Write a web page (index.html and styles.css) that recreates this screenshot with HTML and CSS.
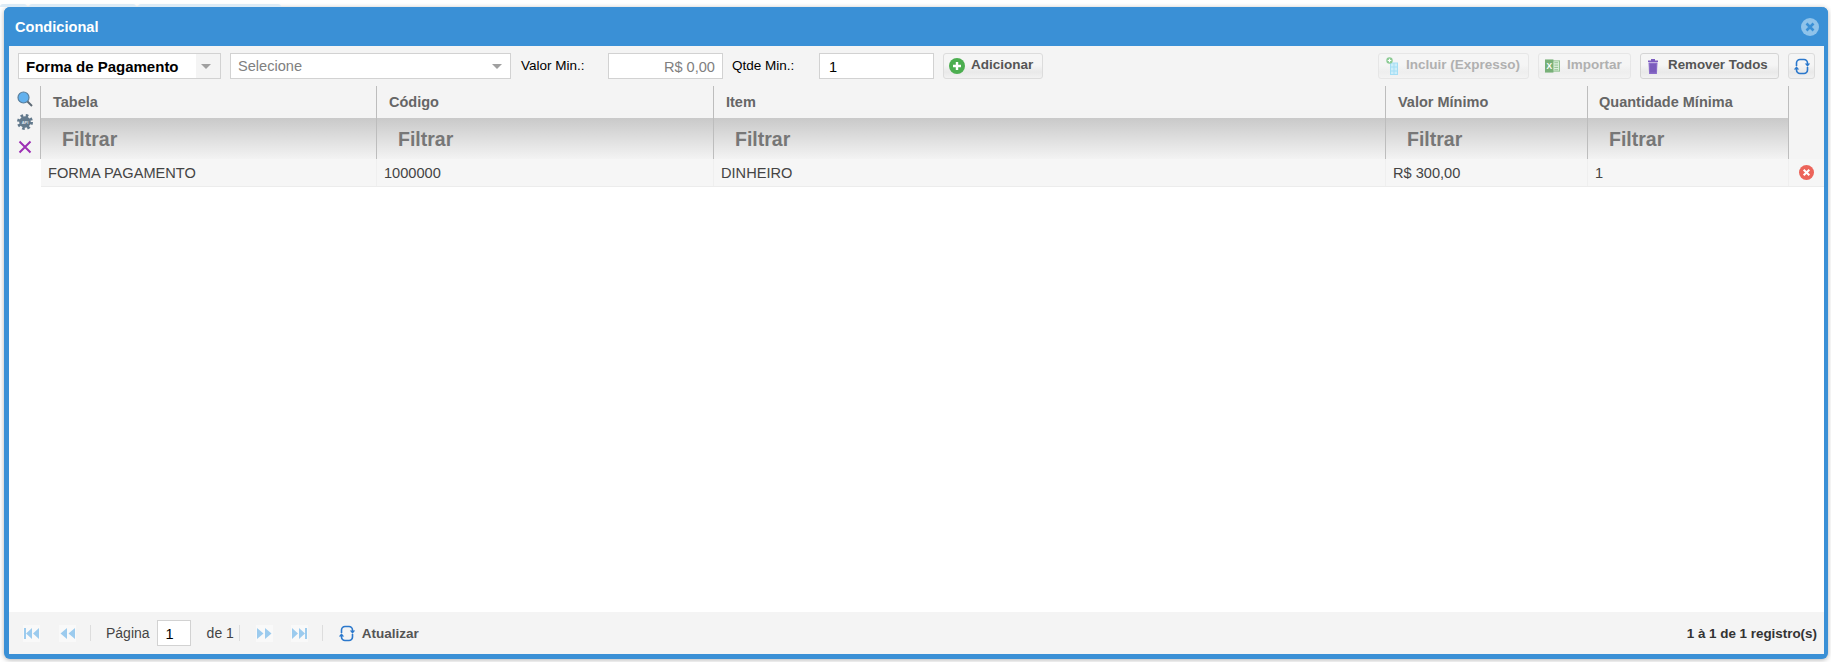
FILE: index.html
```html
<!DOCTYPE html>
<html lang="pt-BR">
<head>
<meta charset="utf-8">
<title>Condicional</title>
<link rel="stylesheet" href="styles.css">
</head>
<body>
<div class="backtabs"><span class="tab tab-a"></span><span class="tab tab-b"></span><span class="tab tab-c"></span></div>
<section class="window">
  <header class="titlebar">
    <h1 class="title">Condicional</h1>
    <svg class="close" viewBox="0 0 18 18"><circle cx="9" cy="9" r="9" fill="#8fc3ea"/><path d="M5.5 5.5l7 7M12.5 5.5l-7 7" stroke="#3a90d6" stroke-width="2.6"/></svg>
  </header>
  <div class="toolbar">
    <div class="select select-type"><span class="select-value">Forma de Pagamento</span><span class="select-arrow"></span></div>
    <div class="select select-item"><span class="select-placeholder">Selecione</span><span class="select-arrow"></span></div>
    <label class="field-label label-valor">Valor Min.:</label>
    <div class="input input-valor">R$ 0,00</div>
    <label class="field-label label-qtde">Qtde Min.:</label>
    <div class="input input-qtde">1</div>
    <button class="btn btn-add"><svg class="ico" viewBox="0 0 16 16"><circle cx="8" cy="8" r="8" fill="#4cae50"/><path d="M8 4v8M4 8h8" stroke="#fff" stroke-width="2.4"/></svg>Adicionar</button>
    <div class="toolbar-right">
      <button class="btn btn-disabled btn-incluir"><svg class="ico-tall" viewBox="0 0 12 18"><rect x="4.500" y="6" width="7" height="11.500" fill="#cdeefa" stroke="#a5def5" stroke-width="1"/><path d="M4.500 10h7M4.500 14h7M8 6v11.500" stroke="#a5def5" stroke-width="1"/><circle cx="3.500" cy="3.500" r="3.200" fill="#8ccb94"/><path d="M3.500 1.700v3.600M1.700 3.500h3.600" stroke="#fff" stroke-width="1.200"/></svg>Incluir (Expresso)</button>
      <button class="btn btn-disabled btn-importar"><svg class="ico-xl" viewBox="0 0 16 14"><rect x="7" y="1.500" width="8.500" height="11" fill="#dcefdc" stroke="#8cc08c"/><path d="M10 3.500h4M10 6h4M10 8.500h4M10 11h4" stroke="#8cc08c"/><rect x="0" y="0" width="9" height="14" fill="#78b078"/><text x="4.500" y="10.500" class="xl-letter">X</text></svg>Importar</button>
      <button class="btn btn-remover"><svg class="ico-trash" viewBox="0 0 12 16"><path d="M1 2.500h10v1.500H1zM4 2.500V1h4v1.500z" fill="#7c5cc0"/><path d="M1.500 4.500h9l-.6 11.500H2.100z" fill="#8a6cc9"/><path d="M4 6v8.500M6 6v8.500M8 6v8.500" stroke="#6b4db0" stroke-width="1"/></svg>Remover Todos</button>
      <button class="btn btn-refresh"><svg class="ico-refresh" viewBox="-1 0 16 17"><path d="M1.500 8V5a3.500 3.500 0 0 1 3.500-3.500h4a3.500 3.500 0 0 1 3.500 3.500v1M12.500 9v3a3.500 3.500 0 0 1-3.500 3.500H5A3.500 3.500 0 0 1 1.500 12v-1" fill="none" stroke="#2b78cc" stroke-width="1.600"/><path d="M9.800 5.500h5.400l-2.700 3.200zM-1.200 11.500h5.400L1.500 8.300z" fill="#2b78cc"/></svg></button>
    </div>
  </div>
  <div class="grid-head">
    <div class="grid-tools">
      <svg class="tool" viewBox="0 0 16 16"><circle cx="6.500" cy="6.500" r="5.500" fill="#62b1ee" stroke="#5a7f9c" stroke-width="1.200"/><path d="M10.500 10.500l4.500 4.500" stroke="#5d6a75" stroke-width="2"/></svg>
      <svg class="tool" viewBox="0 0 16 16"><circle cx="8" cy="8" r="5.800" fill="#62798c"/><circle cx="8" cy="8" r="6.500" fill="none" stroke="#62798c" stroke-width="3" stroke-dasharray="2.550 2.550"/><text x="8" y="9.500" class="api-letter">API</text></svg>
      <svg class="tool tool-clear" viewBox="0 0 16 16"><path d="M2.500 2.500l11 11M13.500 2.500l-11 11" stroke="#9c2fb4" stroke-width="2"/></svg>
    </div>
    <div class="col col-tabela"><div class="col-title">Tabela</div><div class="col-filter">Filtrar</div></div>
    <div class="col col-codigo"><div class="col-title">Código</div><div class="col-filter">Filtrar</div></div>
    <div class="col col-item"><div class="col-title">Item</div><div class="col-filter">Filtrar</div></div>
    <div class="col col-valor"><div class="col-title">Valor Mínimo</div><div class="col-filter">Filtrar</div></div>
    <div class="col col-qtde"><div class="col-title">Quantidade Mínima</div><div class="col-filter">Filtrar</div></div>
    <div class="col-end"></div>
  </div>
  <div class="grid-body">
    <div class="row">
      <div class="cell col-tabela">FORMA PAGAMENTO</div>
      <div class="cell col-codigo">1000000</div>
      <div class="cell col-item">DINHEIRO</div>
      <div class="cell col-valor">R$ 300,00</div>
      <div class="cell col-qtde">1</div>
      <div class="cell cell-del"><svg class="del" viewBox="0 0 16 16"><circle cx="8" cy="8" r="8" fill="#ec645a"/><path d="M5 5l6 6M11 5l-6 6" stroke="#fff" stroke-width="2.200"/></svg></div>
    </div>
  </div>
  <footer class="pager">
    <svg class="pg pg-first" viewBox="0 0 17 17"><rect width="17" height="17" fill="#f9f9f9"/><path d="M1 3h2v11H1zM9 3v11L3 8.500zM16 3v11L10 8.500z" fill="#9ccbee"/></svg>
    <svg class="pg pg-prev" viewBox="0 0 17 17"><rect width="17" height="17" fill="#f9f9f9"/><path d="M8 3v11L1.500 8.500zM16 3v11L9.500 8.500z" fill="#9ccbee"/></svg>
    <span class="sep sep-a"></span>
    <span class="pg-text pg-label">Página</span>
    <div class="input input-page">1</div>
    <span class="pg-text pg-total">de 1</span>
    <span class="sep sep-b"></span>
    <svg class="pg pg-next" viewBox="0 0 17 17"><rect width="17" height="17" fill="#f9f9f9"/><path d="M1 3v11l6.500-5.500zM9 3v11l6.500-5.500z" fill="#9ccbee"/></svg>
    <svg class="pg pg-last" viewBox="0 0 17 17"><rect width="17" height="17" fill="#f9f9f9"/><path d="M1 3v11l6-5.500zM8 3v11l6-5.500zM14 3h2v11h-2z" fill="#9ccbee"/></svg>
    <span class="sep sep-c"></span>
    <svg class="ico-refresh pg-refresh" viewBox="-1 0 16 17"><path d="M1.500 8V5a3.500 3.500 0 0 1 3.500-3.500h4a3.500 3.500 0 0 1 3.500 3.500v1M12.500 9v3a3.500 3.500 0 0 1-3.500 3.500H5A3.500 3.500 0 0 1 1.500 12v-1" fill="none" stroke="#2b78cc" stroke-width="1.600"/><path d="M9.800 5.500h5.400l-2.700 3.200zM-1.200 11.500h5.400L1.500 8.300z" fill="#2b78cc"/></svg>
    <span class="pg-refresh-label">Atualizar</span>
    <span class="pg-count">1 à 1 de 1 registro(s)</span>
  </footer>
</section>
</body>
</html>
```
FILE: styles.css
```css
* { box-sizing: border-box; }
html, body { margin: 0; padding: 0; }
body {
  width: 1831px;
  height: 662px;
  overflow: hidden;
  background: #fff;
  font-family: "Liberation Sans", Arial, sans-serif;
  font-size: 14.600px;
  color: #444;
}
.backtabs { display: flex; height: 3px; margin-top: 4px; gap: 2px; }
.tab { display: block; height: 3px; background: #dcebf6; border-radius: 3px 3px 0 0; }
.tab-a { width: 27px; }
.tab-b { width: 107px; }
.tab-c { width: 143px; }

.window {
  display: flex;
  flex-direction: column;
  width: 1824px;
  height: 652px;
  margin-left: 4px;
  background: #fff;
  border: solid #3a90d6;
  border-width: 0 4px 5px 5px;
  border-radius: 6px;
  box-shadow: 0 1px 5px rgba(0, 0, 0, .3);
}
.titlebar {
  display: flex;
  align-items: center;
  justify-content: space-between;
  flex: none;
  height: 39px;
  margin: 0 -4px 0 -5px;
  padding: 0 9px 0 11px;
  background: #3a90d6;
  border-radius: 6px 6px 0 0;
}
.title { margin: 0; font-size: 14.600px; font-weight: 700; color: #fff; }
.close { width: 18px; height: 18px; }

.toolbar {
  display: flex;
  align-items: flex-start;
  flex: none;
  height: 40px;
  padding: 7px 9px 0 9px;
  background: #f4f4f4;
}
.select {
  display: flex;
  align-items: center;
  justify-content: space-between;
  height: 26px;
  background: #fff;
  border: 1px solid #d2d2d2;
}
.select-type { width: 203px; background: linear-gradient(to right, #fff 0 177px, #f4f4f4 177px); padding: 0 9px 0 7px; }
.select-item { width: 281px; margin-left: 9px; padding: 0 8px 0 7px; }
.select-value { font-size: 15px; font-weight: 700; color: #000; }
.select-placeholder { font-size: 14.600px; color: #808080; }
.select-arrow { width: 0; height: 0; border: 5px solid transparent; border-top: 5px solid #a0a0a0; border-bottom: 0; }
.field-label { font-size: 13.500px; color: #000; line-height: 26px; }
.label-valor { width: 87px; margin-left: 10px; }
.label-qtde { width: 87px; margin-left: 9px; }
.input {
  height: 26px;
  line-height: 26px;
  background: #fff;
  border: 1px solid #d2d2d2;
  font-size: 14.600px;
  color: #000;
}
.input-valor { width: 115px; padding-right: 7px; text-align: right; color: #808080; }
.input-qtde { width: 115px; padding-left: 9px; }
.btn {
  display: flex;
  align-items: center;
  height: 26px;
  padding: 0 0 3px;
  border: 1px solid #dcdcdc;
  border-radius: 3px;
  background: linear-gradient(to bottom, #f5f5f5 0 45%, #e9e9e9 75%, #f2f2f2);
  font-family: inherit;
  font-size: 13.500px;
  font-weight: 700;
  color: #555;
}
.btn svg { margin-top: 3px; }
.btn-add { width: 100px; margin-left: 9px; padding-left: 5px; gap: 6px; }
.ico { width: 16px; height: 16px; }
.toolbar-right { display: flex; margin-left: auto; gap: 9px; }
.btn-disabled { color: #b0b0b0; border-color: #e6e6e6; background: linear-gradient(to bottom, #f5f5f5 0 45%, #eeeeee 75%, #f3f3f3); }
.btn-incluir { width: 151px; padding-left: 7px; gap: 8px; }
.ico-tall { width: 12px; height: 18px; }
.btn-importar { width: 93px; padding-left: 6px; gap: 7px; }
.ico-xl { width: 15px; height: 14px; }
.xl-letter { font-size: 9px; font-weight: 700; fill: #fff; text-anchor: middle; }
.btn-remover { width: 139px; padding-left: 6px; gap: 9px; border-color: #d4d4d4; font-size: 13.330px; }
.ico-trash { width: 12px; height: 16px; }
.btn-refresh { width: 27px; justify-content: center; }
.ico-refresh { width: 16px; height: 17px; flex: none; }

.grid-head {
  display: flex;
  flex: none;
  height: 73px;
  background: #f4f4f4;
}
.grid-tools {
  display: flex;
  flex-direction: column;
  align-items: center;
  width: 32px;
  padding: 5px 0 0;
  gap: 7px;
  border-right: 1px solid #bdbdbd;
}
.tool { width: 16px; height: 16px; flex: none; }
.tool-clear { margin-top: 2px; }
.api-letter { font-size: 4px; font-weight: 700; fill: #dfe6ec; text-anchor: middle; }
.col { flex: none; border-right: 1px solid #bdbdbd; }
.col-tabela { width: 336px; }
.col-codigo { width: 337px; }
.col-item { width: 672px; }
.col-valor { width: 202px; }
.col-qtde { width: 201px; }
.col-title {
  height: 32px;
  padding: 8px 0 0 12px;
  font-size: 14.500px;
  font-weight: 700;
  color: #666;
}
.col-qtde .col-title { padding-left: 11px; }
.col-filter {
  height: 41px;
  padding: 10px 0 0 21px;
  background: linear-gradient(to bottom, #c9c9c9, #f3f3f3);
  font-size: 19.500px;
  font-weight: 700;
  color: #777;
}
.col-end { flex: 1; }

.grid-body { flex: 1; padding-left: 32px; }
.row {
  display: flex;
  height: 28px;
  background: #f6f6f6;
  border-bottom: 1px solid #ececec;
}
.cell {
  flex: none;
  padding: 4px 0 0 7px;
  line-height: 20px;
  font-size: 14.600px;
  color: #444;
  border-right: 1px solid #efefef;
}
.cell-del { flex: 1; padding: 6px 0 0 10px; border-right: 0; }
.del { display: block; width: 15px; height: 15px; }

.pager {
  display: flex;
  align-items: center;
  flex: none;
  height: 42px;
  padding-left: 14px;
  background: #f4f4f4;
}
.pg { width: 17px; height: 17px; flex: none; }
.pg-prev { margin-left: 19px; }
.sep { width: 1px; height: 16px; background: #ddd; flex: none; }
.sep-a { margin-left: 14px; }
.pg-text { font-size: 14px; color: #444; }
.pg-label { margin-left: 15px; }
.input-page { width: 34px; margin-left: 7px; padding-left: 8px; }
.pg-total { margin-left: 16px; }
.sep-b { margin-left: 5px; }
.pg-next { margin-left: 16px; }
.pg-last { margin-left: 18px; }
.sep-c { margin-left: 14px; }
.pg-refresh { margin-left: 16px; }
.pg-refresh-label { margin-left: 7px; font-size: 13.500px; font-weight: 700; color: #555; }
.pg-count { margin-left: auto; padding-right: 7px; font-size: 13.400px; font-weight: 700; color: #333; }
```
